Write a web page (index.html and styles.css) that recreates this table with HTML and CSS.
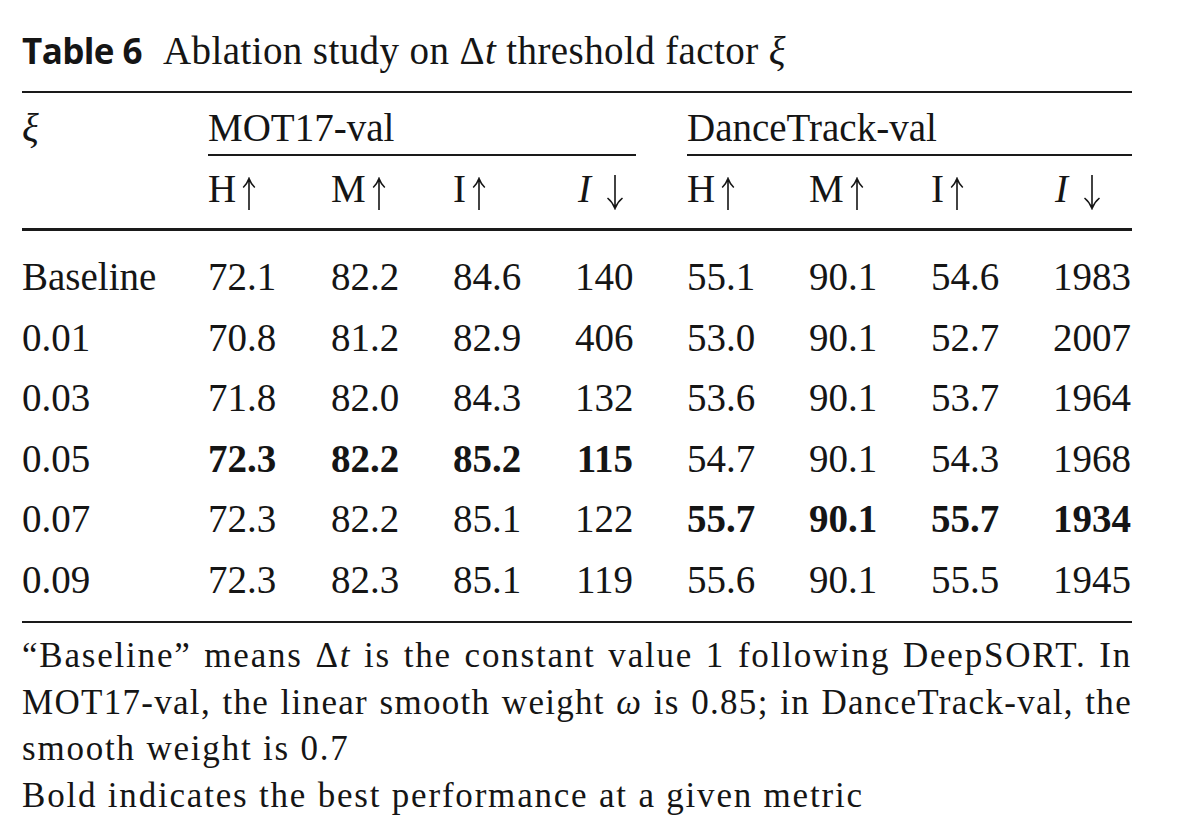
FILE: index.html
```html
<!DOCTYPE html>
<html lang="en">
<head>
<meta charset="utf-8">
<title>Table 6</title>
<link rel="stylesheet" href="styles.css">
</head>
<body>
<div class="page">
  <div class="caption"><span class="label">Table 6</span>Ablation study on Δ<i>t</i> threshold factor <i>ξ</i></div>
  <div class="rule rule-top"></div>

  <div class="row head1">
    <span class="cell"><i>ξ</i></span>
    <span class="cell group g1">MOT17-val</span>
    <span class="cell gap"></span>
    <span class="cell group g2">DanceTrack-val</span>
  </div>
  <div class="row head2">
    <span class="cell"></span>
    <span class="cell">H<svg class="up" viewBox="0 0 14 33" aria-label="↑"><path d="M7 2V33M1.2 10.5Q5 7 7 1.5Q9 7 12.8 10.5"/></svg></span>
    <span class="cell">M<svg class="up" viewBox="0 0 14 33" aria-label="↑"><path d="M7 2V33M1.2 10.5Q5 7 7 1.5Q9 7 12.8 10.5"/></svg></span>
    <span class="cell">I<svg class="up" viewBox="0 0 14 33" aria-label="↑"><path d="M7 2V33M1.2 10.5Q5 7 7 1.5Q9 7 12.8 10.5"/></svg></span>
    <span class="cell hl"><i>I</i><svg class="down" viewBox="0 0 18 35" aria-label="↓"><path d="M9 0V33M1.5 23Q6.5 27 9 33.5Q11.5 27 16.5 23"/></svg></span>
    <span class="cell"></span>
    <span class="cell">H<svg class="up" viewBox="0 0 14 33" aria-label="↑"><path d="M7 2V33M1.2 10.5Q5 7 7 1.5Q9 7 12.8 10.5"/></svg></span>
    <span class="cell">M<svg class="up" viewBox="0 0 14 33" aria-label="↑"><path d="M7 2V33M1.2 10.5Q5 7 7 1.5Q9 7 12.8 10.5"/></svg></span>
    <span class="cell">I<svg class="up" viewBox="0 0 14 33" aria-label="↑"><path d="M7 2V33M1.2 10.5Q5 7 7 1.5Q9 7 12.8 10.5"/></svg></span>
    <span class="cell hl hl2"><i>I</i><svg class="down" viewBox="0 0 18 35" aria-label="↓"><path d="M9 0V33M1.5 23Q6.5 27 9 33.5Q11.5 27 16.5 23"/></svg></span>
  </div>
  <div class="rule rule-thick"></div>

  <div class="body">
    <div class="row data">
      <span class="cell">Baseline</span><span class="cell">72.1</span><span class="cell">82.2</span><span class="cell">84.6</span><span class="cell num">140</span><span class="cell"></span><span class="cell">55.1</span><span class="cell">90.1</span><span class="cell">54.6</span><span class="cell num">1983</span>
    </div>
    <div class="row data">
      <span class="cell">0.01</span><span class="cell">70.8</span><span class="cell">81.2</span><span class="cell">82.9</span><span class="cell num">406</span><span class="cell"></span><span class="cell">53.0</span><span class="cell">90.1</span><span class="cell">52.7</span><span class="cell num">2007</span>
    </div>
    <div class="row data">
      <span class="cell">0.03</span><span class="cell">71.8</span><span class="cell">82.0</span><span class="cell">84.3</span><span class="cell num">132</span><span class="cell"></span><span class="cell">53.6</span><span class="cell">90.1</span><span class="cell">53.7</span><span class="cell num">1964</span>
    </div>
    <div class="row data">
      <span class="cell">0.05</span><span class="cell best">72.3</span><span class="cell best">82.2</span><span class="cell best">85.2</span><span class="cell num best">115</span><span class="cell"></span><span class="cell">54.7</span><span class="cell">90.1</span><span class="cell">54.3</span><span class="cell num">1968</span>
    </div>
    <div class="row data">
      <span class="cell">0.07</span><span class="cell">72.3</span><span class="cell">82.2</span><span class="cell">85.1</span><span class="cell num">122</span><span class="cell"></span><span class="cell best">55.7</span><span class="cell best">90.1</span><span class="cell best">55.7</span><span class="cell num best">1934</span>
    </div>
    <div class="row data">
      <span class="cell">0.09</span><span class="cell">72.3</span><span class="cell">82.3</span><span class="cell">85.1</span><span class="cell num">119</span><span class="cell"></span><span class="cell">55.6</span><span class="cell">90.1</span><span class="cell">55.5</span><span class="cell num">1945</span>
    </div>
  </div>
  <div class="rule rule-bottom"></div>

  <div class="notes">
    <div class="line just">“Baseline” means Δ<i>t</i> is the constant value 1 following DeepSORT. In</div>
    <div class="line just tight">MOT17-val, the linear smooth weight <i>ω</i> is 0.85; in DanceTrack-val, the</div>
    <div class="line">smooth weight is 0.7</div>
    <div class="line">Bold indicates the best performance at a given metric</div>
  </div>
</div>
</body>
</html>
```

FILE: styles.css
```css
html, body {
  margin: 0;
  padding: 0;
  background: #ffffff;
}

body {
  color: #151515;
  font-family: "Liberation Serif", "Times New Roman", serif;
}

.page {
  width: 1110px;
  padding: 26px 45px 0 22px;
}

.caption {
  font-size: 39px;
  line-height: 50px;
  letter-spacing: 0.4px;
  white-space: nowrap;
}

.caption .label {
  display: inline-block;
  width: 141px;
  font-family: "Open Sans", "Liberation Sans", sans-serif;
  font-weight: 700;
  font-size: 35px;
  letter-spacing: -0.6px;
}

.rule {
  background: #1a1a1a;
}

.rule-top {
  margin-top: 15px;
  height: 2px;
}

.rule-thick {
  margin-top: 9px;
  height: 3px;
}

.rule-bottom {
  margin-top: 11px;
  height: 2px;
}

.row {
  display: grid;
  grid-template-columns: 186px 123px 122px 122px 61px 51px 122px 122px 122px 79px;
  align-items: start;
  font-size: 39px;
  white-space: nowrap;
}

.head1 {
  margin-top: 11px;
  line-height: 48px;
}

.head1 .g1 {
  grid-column: 2 / 6;
}

.head1 .g2 {
  grid-column: 7 / 11;
}

.head1 .group {
  padding-bottom: 2px;
  border-bottom: 2px solid #1a1a1a;
}

.head2 {
  line-height: 60px;
}

.head2 .cell {
  padding-top: 3px;
}

.head2 .hl {
  padding-left: 3px;
}

.head2 .hl2 {
  padding-left: 2px;
}

.up {
  width: 14px;
  height: 33px;
  margin-left: 6px;
  vertical-align: -8px;
  fill: none;
  stroke: #151515;
  stroke-width: 1.6px;
}

.down {
  width: 18px;
  height: 35px;
  margin-left: 15px;
  vertical-align: -8px;
  fill: none;
  stroke: #151515;
  stroke-width: 1.6px;
}

.body {
  padding-top: 16px;
}

.data {
  line-height: 60.5px;
}

.num {
  text-align: right;
  padding-right: 3px;
}

.best {
  font-weight: 700;
}

.notes {
  margin-top: 10px;
  font-size: 35px;
  line-height: 46.5px;
  letter-spacing: 1.8px;
  white-space: nowrap;
}

.notes .just {
  text-align: justify;
  text-align-last: justify;
  white-space: normal;
  word-spacing: -3px;
}

.notes .tight {
  letter-spacing: 1.3px;
  word-spacing: -5px;
}
```
